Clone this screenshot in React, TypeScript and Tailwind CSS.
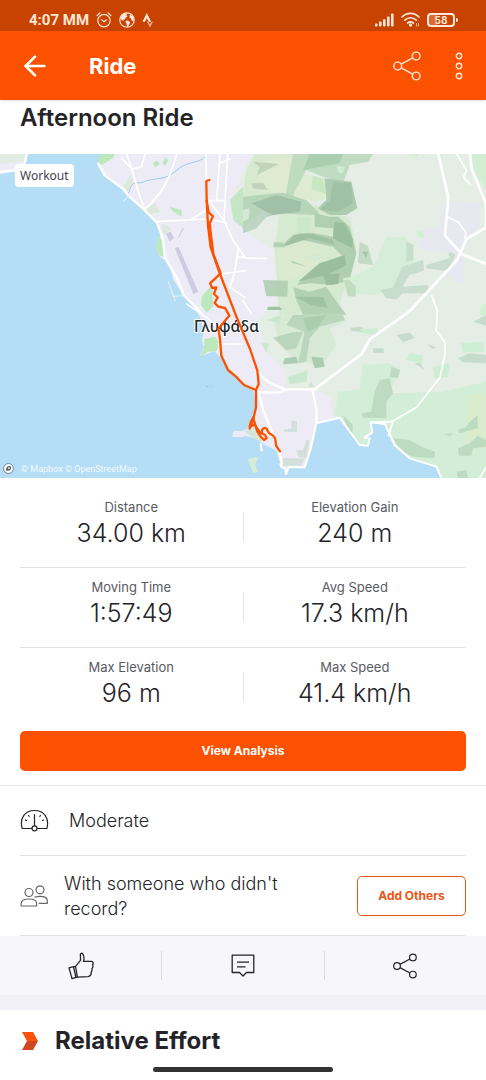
import React from 'react';
import { ArrowLeft } from 'lucide-react';

type Stat = {
  label: string;
  value: string;
};

const statRows: [Stat, Stat][] = [
  [
    { label: 'Distance', value: '34.00 km' },
    { label: 'Elevation Gain', value: '240 m' },
  ],
  [
    { label: 'Moving Time', value: '1:57:49' },
    { label: 'Avg Speed', value: '17.3 km/h' },
  ],
  [
    { label: 'Max Elevation', value: '96 m' },
    { label: 'Max Speed', value: '41.4 km/h' },
  ],
];

const ShareIcon: React.FC<{ className?: string }> = ({ className }) => (
  <svg viewBox="0 0 28 30" className={className} fill="none" stroke="currentColor" strokeWidth="1.4" aria-hidden="true">
    <circle cx="4.7" cy="15" r="3.9" />
    <circle cx="23.2" cy="5" r="3.9" />
    <circle cx="23.2" cy="25" r="3.9" />
    <path d="M8.1 13.1 19.8 6.9M8.1 16.9l11.7 6.2" />
  </svg>
);

const StatusBar = () => (
  <div className="flex h-[31px] items-center justify-between bg-[#c84200] pt-2 pr-7 pl-[29px] text-[#ffe6d8]">
    <div className="flex items-center gap-[7px]">
      <span className="font-['Roboto',sans-serif] text-[15px] leading-5 font-bold">4:07 MM</span>
      {/* alarm */}
      <svg viewBox="0 0 16 16" className="h-4 w-4" fill="none" stroke="currentColor" strokeWidth="1.2" strokeLinecap="round">
        <circle cx="8" cy="8.6" r="6.2" />
        <path d="M1 3.6 3.8 1M15 3.6 12.2 1M5.4 7.6 8 9.8l2.6-2" />
      </svg>
      {/* globe */}
      <svg viewBox="0 0 16 16" className="h-4 w-4">
        <circle cx="8" cy="8" r="7.2" fill="none" stroke="currentColor" strokeWidth="1.2" />
        <path
          fill="currentColor"
          d="M2.6 3.6 6 1.2l2.2.6-.8 1.6 1.2 1-1.8 1.4-1 1.6-1.6.2.6 1.4-1.8-.8L1.4 6.4zM7 8.6l2.4.2 1.8 1.4-.8 2-1.4 2.4-1.2-.4-.2-2.6L6.4 10zM11 2.2l2.8 2 1 2.8-.4 2.4-1.8-1-.6-2-1.6-1z"
        />
      </svg>
      <svg viewBox="0 0 12 16" className="h-4 w-3" fill="currentColor">
        <path d="M4.8 1 0.4 9.8h2.5l1.9-3.6 1.9 3.6h2.5z" />
        <path d="M9.2 9.8 8 12.2 6.7 9.8H4.9L8 15.6l3-5.8z" opacity=".65" />
      </svg>
    </div>
    <div className="flex items-center gap-[7px]">
      <svg viewBox="0 0 19 14" className="h-[14px] w-[19px]" fill="currentColor">
        <rect x="0" y="10.6" width="2.6" height="2.8" rx=".8" />
        <rect x="4" y="8.6" width="2.6" height="4.8" rx=".8" />
        <rect x="8" y="6.2" width="2.6" height="7.2" rx=".8" />
        <rect x="12" y="3.6" width="2.6" height="9.8" rx=".8" />
        <rect x="16" y=".6" width="2.6" height="12.8" rx=".8" />
      </svg>
      <svg viewBox="0 0 19 15" className="h-[15px] w-[19px]" fill="none" stroke="currentColor" strokeWidth="1.7" strokeLinecap="round">
        <path d="M1 5C5.8.2 13.2.2 18 5M3.8 8.2c3.4-3.2 8-3.2 11.400 0M6.600 11c1.800-1.500 4-1.500 5.800 0" />
        <circle cx="9.500" cy="13" r=".8" fill="currentColor" />
        <path d="M15.600 11.500v2.500M17.500 11.500v2.500" strokeWidth="1" opacity=".7" />
      </svg>
      <div className="flex items-center">
        <span className="flex h-[14px] w-7 items-center justify-center rounded-[4px] border-2 border-current bg-[linear-gradient(90deg,#dd6a32_35%,#c84200_35%)] text-[10px] leading-[10px] font-bold">
          58
        </span>
        <span className="ml-px h-1 w-0.5 rounded-r bg-current"></span>
      </div>
    </div>
  </div>
);

// Roads, coast and hills share one 1458 x 972 drawing space
const RouteMap = () => (
  <div className="relative w-full">
    <svg viewBox="0 0 1458 972" className="block h-auto w-full" role="img" aria-label="Route map">
      <rect width="1458" height="972" fill="#b5def6" />
      {/* land */}
      <path
        d="M0 0H85L78 22 72 48 0 60zM305 0 292 25 315 65 370 105 390 130 430 165 470 205 485 232 478 255 468 283 480 308 495 318 512 345 520 378 550 422 580 453 600 490 612 530 605 560 612 580 600 606 645 592 665 615 690 652 729 690 762 710 767 760 752 800 744 824 729 828 732 845 765 852 790 870 830 890 841 930 855 945 859 962 866 940 914 940 932 885 949 808 1019 791 1079 873 1104 875 1109 853 1094 851 1117 835 1112 805 1159 813 1184 873 1229 913 1309 938 1324 972H1458V0z"
        fill="#edecf6"
      />
      <path d="M0 0H80L72 22 0 30z" fill="#e1ece2" />
      <path d="M756 0H1458V972H1324L1309 938 1229 913 1184 873 1159 813 1112 805 1117 835 1094 851 1109 853 1104 875 1079 873 1019 791 1000 795 990 730 940 705 860 708 850 650 800 590 770 500 830 440 820 290 735 230 700 120z" fill="#e4eee5" />

      {/* upper hills */}
      <g transform="translate(729 -12)" opacity=".8">
        <path d="M-30 145 0 130 10 60 35 15 150 12 140 100 60 170-30 190z" fill="#d5eacb" />
        <path d="M45 40 150 12 130 130 55 125z" fill="#dfebcd" />
        <path d="M110 190 220 165 320 205 340 290 310 400 280 495H110L95 290z" fill="#d2eacb" />
        <path d="M150 12H390L375 35 320 45 300 100 240 80 190 60 150 140 125 150z" fill="#b7d7b8" />
        <path d="M200 12H300L290 40 180 60z" fill="#9fc7a4" />
        <path d="M0 140 120 128 190 150 230 190 210 195 110 190 60 205 0 240-10 180z" fill="#acd0af" />
        <path d="M25 160 100 135 175 155 170 185 90 195 60 180z" fill="#91b59a" />
        <path d="M240 85 325 95 343 175 310 195 260 195 225 175 250 150z" fill="#9fc3a2" />
        <path d="M270 95 325 100 330 160 285 185 230 180 262 150z" fill="#8eb898" />
        <path d="M185 72 245 85 250 145 215 155 150 135z" fill="#dcebcb" />
        <path d="M210 78 240 88 250 132 205 118z" fill="#c2e5b7" />
        <path d="M30 35 108 42 42 75 50 52zM25 100 60 98 75 120 30 115z" fill="#b6ceb0" />
        <path d="M0 180 20 175 18 205 0 215z" fill="#d0ead1" />
        <path d="M0 235 60 180 75 195 40 235 0 250z" fill="#b6cfbd" />
        <path d="M215 190 260 200 285 200 320 230 340 310 320 390 270 405 200 400 160 405 230 350 300 320 270 290 170 268 110 292 150 255 190 245 270 260 270 235 215 230z" fill="#a4c7a5" />
        <path d="M275 215 305 220 330 270 328 295 270 265zM165 395 230 340 305 315 310 345 260 372zM240 375 290 370 285 402 250 405z" fill="#88b38d" />
        <path d="M120 290 155 255 200 250 270 270 275 285 200 265z" fill="#8fb595" />
        <path d="M105 300 200 275 240 305 180 320 225 340 160 385 110 390z" fill="#dbebcb" />
        <path d="M165 200 205 205 205 250 160 250z" fill="#c6e8c0" />
        <path d="M92 277 120 277 125 292 92 292zM140 330 195 350 150 340zM60 390 135 392 133 440 70 438zM150 412 200 425 250 410 270 440 310 494H180L160 450z" fill="#a8cbaa" />
        <path d="M155 440 240 440 255 475 205 465zM75 470 110 470 118 480 72 480z" fill="#8fb995" />
        <path d="M280 48 305 50 300 70 288 68z" fill="#d0ead1" />
        <path d="M350 275 375 288 390 345 345 340z" fill="#bcd7bc" />
        <path d="M358 305 375 305 370 325z" fill="#93bc97" />
        <path d="M330 380 390 350 430 260 490 262 515 330 470 400 400 435 310 430 300 385z" fill="#d3eed6" />
        <path d="M490 275 512 285 510 330 490 335zM478 350 540 330 543 362 500 375 478 410 555 405 557 430 480 430 460 448 430 445 412 420 450 412zM550 345 620 325 615 300 645 320 640 350 600 362 550 355z" fill="#c2dac5" />
        <path d="M303 390 318 390 338 408 338 440 315 438z" fill="#bad8ba" />
        <path d="M595 155 710 160 710 220 660 300 665 395 640 400 610 370 640 310 525 300 540 235 590 230z" fill="#e9e7f3" />
        <path d="M520 245 540 243 543 262 525 264zM685 12H729V120L690 60zM500 12H528L520 22zM715 465 729 460V495H710z" fill="#ceefcf" />
      </g>

      {/* lower hills */}
      <g transform="translate(729 483)">
        <path d="M90 10 130 0H250L300 0 310 20 260 40 280 90 230 160 190 140 170 145 110 90z" fill="#d6ead5" />
        <path d="M150 0H300L305 15 230 35 200 70 190 140 165 145 185 50 130 30zM90 68 150 52 180 50 160 100 130 105z" fill="#bad6bc" />
        <path d="M205 125 240 128 245 155 215 160zM180 10 250 0 225 35 195 50zM125 130 160 125 165 145 120 148z" fill="#acccb0" />
        <path d="M55 85 78 85 70 115zM135 185 195 165 190 200 140 208zM70 15 115 0 110 25z" fill="#cbe8ce" />
        <path d="M285 230 350 225 360 150 440 145 470 160 440 235 600 230 729 200V489H595L580 455 500 430 455 390 430 330 383 322 388 352 365 368 380 370 375 392 350 390 290 308 275 300z" fill="#d3eed7" />
        <path d="M410 195 440 190 450 235 430 260 430 310 360 308 355 295 385 290 395 230zM445 155 472 165 465 190 440 185zM300 300 330 330 328 355 310 340z" fill="#bddbc0" />
        <path d="M460 60 500 53 515 68 480 82zM390 100 422 100 422 114 390 114zM645 130 680 115 729 120V145L660 142zM515 145 530 142 545 165zM320 38 360 35 365 52 325 48zM552 88 578 95 570 103zM690 20 729 0V32z" fill="#c8dccb" />
        <path d="M350 42 405 40 400 62 360 55zM490 135 500 115 540 120 538 145zM570 155 620 145 615 185 575 190zM655 85 720 80 725 110 660 112z" fill="#cdeed2" />
        <path d="M668 240 720 235 729 260V400L670 400z" fill="#daecce" />
        <path d="M450 370 500 375 535 395 575 410 575 430 510 425 470 405zM645 345 670 335 680 320 704 300 704 340 650 355zM645 400 680 385 704 362 729 375V395L690 400 685 422 648 422zM600 358 630 355 622 364zM640 470 670 465 675 489H645z" fill="#bddbc0" />
        <path d="M120 345 145 340 145 318 162 318 162 350 125 352zM160 405 180 405 190 375 200 375 190 430 165 425zM120 430 185 430 175 452 120 452zM195 215 205 200 213 215z" fill="#d3dfda" />
        <path d="M70 340 115 345 105 375z" fill="#edeaf2" />
        <path d="M388 325 435 335 430 360 410 350 395 358z" fill="#b5def6" />
      </g>

      {/* islets and parks on the coast side */}
      <g transform="translate(0 483)" fill="#bce8bc">
        <path d="M612 72 645 65 658 85 650 108 625 110 600 125 612 100z" />
        <path d="M700 348H732V366H697z" fill="#ecebf5" />
        <path d="M743 432 775 425 765 450 775 470 760 475z" fill="#d5ecd7" />
        <path d="M729 348 765 340 790 370 780 380z" fill="#d6e6d8" />
      </g>
      <path d="M617 695l8 5M632 696l4 3" stroke="#9cc6e2" strokeWidth="3" />
      <g transform="translate(0 -12)">
        <path d="M300 12H345L338 25 305 45 292 35zM475 255 488 275 497 320 480 318 468 295zM458 40 470 32 480 42 465 52zM495 22 505 30 495 48 488 40zM508 170 545 180 545 200 520 185zM605 440 635 405 640 470 620 488 603 465z" fill="#bbe8bd" />
        <path d="M690 150 729 110V235L700 210z" fill="#c5e5c5" />
        <path d="M370 110 390 75 400 90 385 125zM430 180 465 160 480 185 445 195zM485 220 515 235 490 255z" fill="#dde9d9" />
        <path d="M498 250 512 245 522 265 508 275zM525 295 535 290 595 425 580 432z" fill="#cfcbe0" />
        <path d="M550 235 535 262" stroke="#d5d2e4" strokeWidth="4" fill="none" />
        <path d="M620 18C590 45 560 30 525 65 490 95 460 80 425 98 390 95 395 110 385 130" stroke="#9fcbe8" strokeWidth="3" fill="none" />
      </g>

      {/* roads */}
      <g fill="none" stroke="#fff" strokeLinejoin="round" strokeLinecap="round">
        <path d="M295 30 315 65 370 105 385 125 430 165 470 205 488 250 495 310 535 380 550 422 605 478M0 54 70 46 80 0" strokeWidth="7" />
        <path d="M370 142 385 125M505 382 520 428 545 425M525 440 522 425" stroke="#d9eef9" strokeWidth="4" />
        <path d="M380 0 400 60 420 130 435 165M365 12 395 45 425 38 435 0M530 0C515 60 490 120 435 165M470 203 620 195 675 205M575 195 625 165M618 0 620 140M660 0 650 140M655 30 690 15M683 0 672 200 700 260 735 310M620 140H672M630 145 680 210M715 280 705 350 690 400 735 430M660 360 735 350M710 310H735M560 450 620 490 655 520M655 570H730M729 300 735 312 800 314M729 440 755 480" strokeWidth="5" />
        <path d="M770 650C800 690 830 695 850 703M774 710 790 770 815 830 838 890 845 930M774 714 840 716 860 706 945 706M938 710 950 770 949 808" strokeWidth="7" />
        <path d="M945 705 1085 600 1110 555 1225 475 1370 320 1400 255 1458 220M1315 0 1345 130 1335 245 1385 300 1458 330M1410 0 1415 45 1458 150V220" strokeWidth="8" />
        <path d="M1345 190 1375 205 1397 235 1395 255M1370 0 1400 50 1390 70 1410 90M1295 425 1312 470 1309 530 1335 565 1335 600 1320 670 1250 760 1175 803 1112 805M1165 845 1178 805M1458 940 1440 970" strokeWidth="5" />
        <path d="M841 930 845 940 855 942 858 960 866 940 914 940 932 885 949 808 1019 791 1079 873 1104 875 1109 853 1094 851 1117 835 1112 805 1155 810 1184 873 1229 913 1309 938 1324 972M782 870 785 890" strokeWidth="6" />
      </g>

      <text x="582" y="534" className="font-['Noto_Sans',sans-serif] font-medium" fontSize="46" fill="#20242a" stroke="#fff" strokeWidth="6" paintOrder="stroke">
        Γλυφάδα
      </text>

      {/* activity route */}
      <g fill="none" stroke="#fc5200" strokeWidth="7" strokeLinejoin="round" strokeLinecap="round">
        <path d="M628 78 619 81 620 140 624 215 632 280 660 360 710 490 750 585 772 650 776 690 768 708 768 760 760 795 749 824" />
        <path d="M620 140 626 175 639 187 629 208 632 235 640 300 662 358 630 388 637 402 649 400 642 420 653 430 644 447 655 458 675 462 688 485 680 494 655 524 660 555 664 605 684 648 708 668 732 693 768 708" />
        <path d="M760 790 752 805 749 818 765 812 772 832 782 848 792 858 800 852 795 843 782 836M760 795 768 818 780 836M786 838C784 828 790 820 796 822 806 826 800 836 812 840 830 850 825 860 829 876L840 892" />
      </g>
    </svg>
    <span className="absolute top-[10px] left-[15px] rounded-sm bg-white px-[5px] py-px font-['Noto_Sans',sans-serif] text-[12px] leading-[21px] text-[#43434c]">
      Workout
    </span>
    <div className="absolute bottom-1 left-[3px] flex items-center gap-[7px] font-['Roboto',sans-serif] text-[9px] leading-[10px] text-[#f2f9fd]">
      <svg viewBox="0 0 12 12" className="h-[11px] w-[11px]">
        <circle cx="6" cy="6" r="5.400" fill="#fff" stroke="#6b7780" strokeWidth="1" />
        <path d="M3.500 8.500C3 5 4.500 3.200 6.800 3.200a2.200 2.200 0 0 1 2 2.800C8.300 8 6 8.800 3.500 8.500z" fill="#56616a" />
        <circle cx="6.500" cy="5.500" r="1" fill="#fff" />
      </svg>
      <span>
        <a href="#mapbox">© Mapbox</a> <a href="#osm">© OpenStreetMap</a>
      </span>
    </div>
  </div>
);

const StatCell: React.FC<{ stat: Stat }> = ({ stat }) => (
  <div className="flex flex-1 flex-col items-center gap-0.5">
    <span className="text-[13px] leading-4 text-[#5a5a62]">{stat.label}</span>
    <span className="text-[25px] leading-8 font-light">{stat.value}</span>
  </div>
);

export default function App() {
  return (
    <main className="flex min-h-screen w-full flex-col bg-white font-['Inter',sans-serif] text-[#242428]">
      <StatusBar />
      <header className="z-10 flex h-[69px] items-center bg-[#fc5200] pr-[17px] pl-5 text-white shadow-sm">
        <button type="button" aria-label="Back" className="flex h-10 w-[30px] items-center justify-center">
          <ArrowLeft className="h-8 w-8 shrink-0" strokeWidth={2} />
        </button>
        <h1 className="ml-[39px] flex-1 text-[22px] leading-7 font-bold">Ride</h1>
        <button type="button" aria-label="Share" className="text-[#ffe8dc]">
          <ShareIcon className="h-[30px] w-7" />
        </button>
        <button type="button" aria-label="More options" className="ml-7 flex w-5 justify-center text-[#ffe8dc]">
          <svg viewBox="0 0 8 28" className="h-7 w-2" fill="none" stroke="currentColor" strokeWidth="1.4">
            <circle cx="4" cy="4" r="2.700" />
            <circle cx="4" cy="14" r="2.700" />
            <circle cx="4" cy="24" r="2.700" />
          </svg>
        </button>
      </header>

      <h2 className="px-5 pt-1 pb-[22px] text-2xl leading-7 font-semibold">Afternoon Ride</h2>

      <RouteMap />

      {/* Stats */}
      <section className="px-5 pt-[10px] pb-[14px]">
        {statRows.map((row) => (
          <div key={row[0].label} className="flex border-b border-[#dfdfe5] pt-[11px] pb-[18px] last-of-type:border-b-0">
            <StatCell stat={row[0]} />
            <div className="mt-[13px] h-[30px] w-px bg-[#e4e4ea]"></div>
            <StatCell stat={row[1]} />
          </div>
        ))}
        <button type="button" className="mt-1 h-10 w-full rounded-[5px] bg-[#fc5200] text-[12px] font-bold text-white">
          View Analysis
        </button>
      </section>

      <section className="border-t border-[#e6e6ec]">
        <div className="mx-5 flex h-[70px] items-center gap-5 border-b border-[#dfdfe5]">
          <svg viewBox="0 0 29 23" className="h-[23px] w-[29px]" fill="none" stroke="currentColor" strokeWidth="1.2" strokeLinecap="round">
            <path d="M11.800 19.500H2.200C-.8 9 5 1.500 14.500 1.500S29.800 9 26.800 19.500H17.200" />
            <circle cx="14.500" cy="19.300" r="2.500" />
            <path d="M14.500 16.500V5.500M5.500 11l1 .5M8.500 6.500l.7.900M20.500 6.500l-.7.900M23.500 11l-1 .5" />
          </svg>
          <span className="text-lg leading-6 font-light">Moderate</span>
        </div>
        <div className="mx-5 flex h-20 items-center gap-4 border-b border-[#dfdfe5]">
          <svg viewBox="0 0 28 22" className="h-[22px] w-7 shrink-0" fill="none" stroke="#66666e" strokeWidth="1.200" strokeLinejoin="round">
            <circle cx="9" cy="7.500" r="4" />
            <circle cx="20" cy="4.800" r="4" />
            <path d="M1.200 21v-2.500C1.200 15.500 4 14 9 14s7.600 1.500 7.600 4.500V21zM14.500 12.200c1.500-.6 3.300-.9 5.500-.9 5 0 7.300 1.700 7.300 4.500v2.500h-8.600" />
          </svg>
          <p className="flex-1 text-lg leading-[25px] font-light">With someone who didn't record?</p>
          <button
            type="button"
            className="h-10 w-[109px] shrink-0 rounded-[5px] border border-[#e4571b] text-[12px] font-bold text-[#ec5513]"
          >
            Add Others
          </button>
        </div>
      </section>

      {/* Kudos / comment / share */}
      <div className="flex items-center border-b-[15px] border-[#f1f1f7] bg-[#f7f7fa] pt-[15px] pb-[15px]">
        <button type="button" aria-label="Give kudos" className="flex h-[29px] flex-1 items-center justify-center">
          <svg viewBox="0 0 26 28" className="h-7 w-[26px]" fill="none" stroke="currentColor" strokeWidth="1.300" strokeLinejoin="round">
            <path d="M1 15.800 5.400 14.700 8 25.400 4 26.700zM5.400 14.700 7.500 14.300 9.400 25.200 8 25.400M7.500 14.300 12.500 8.300 12.400 2.500C12.300 1 14.300.8 15 2.300 16.200 4.800 16.400 6.800 15.600 9.300H23.500C25.500 9.600 25.400 11.600 24.600 12.600 25.200 14 24.800 15.600 24 16.400 24.300 18 23.800 19.400 23.100 20.200 23.300 22.500 22.300 24.300 20 24.600L9.400 25.200" />
          </svg>
        </button>
        <div className="h-[29px] w-px bg-[#dcdce2]"></div>
        <button type="button" aria-label="Comment" className="flex h-[29px] flex-1 items-center justify-center">
          <svg viewBox="0 0 24 23" className="h-[23px] w-6" fill="none" stroke="currentColor" strokeWidth="1.300" strokeLinejoin="round">
            <path d="M1.200 1.200H22.800V18.500H15.500L12 22 8.500 18.500H1.200zM6 8.200h12M6 12.800h8.500" />
          </svg>
        </button>
        <div className="h-[29px] w-px bg-[#dcdce2]"></div>
        <button type="button" aria-label="Share activity" className="flex h-[29px] flex-1 items-center justify-center">
          <ShareIcon className="h-[26px] w-6" />
        </button>
      </div>

      <section className="flex items-center gap-[17px] px-[22px] pt-4">
        <svg viewBox="0 0 16 18" className="h-[18px] w-4">
          <path d="M0 0H11L16 9H5z" fill="#f8520c" />
          <path d="M5 9H16L11 18H0z" fill="#cf4620" />
        </svg>
        <h2 className="text-2xl leading-[30px] font-bold">Relative Effort</h2>
      </section>

      <div className="mx-auto mt-[11px] mb-2 h-[5px] w-[180px] rounded-full bg-[#333336]"></div>
    </main>
  );
}
